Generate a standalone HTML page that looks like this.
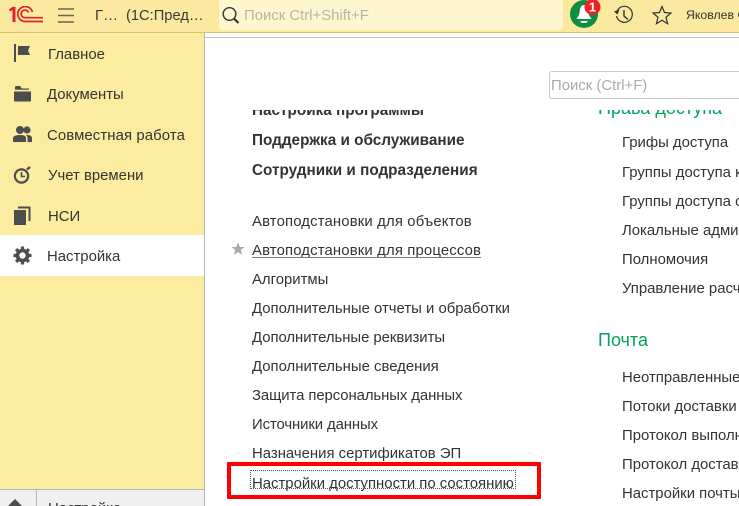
<!DOCTYPE html>
<html lang="ru">
<head>
<meta charset="utf-8">
<title>1С</title>
<style>
html,body{margin:0;padding:0;background:#fff}
#p{position:relative;width:739px;height:506px;overflow:hidden;background:#fff;font-family:"Liberation Sans",sans-serif;font-size:14.9px;color:#333}
#p div,#p svg{position:absolute}
.t{position:absolute;white-space:nowrap;line-height:16px;height:16px}
.b{font-weight:bold;font-size:15.3px}
.g{color:#00a35c;font-size:18px;line-height:20px;height:20px}
</style>
</head>
<body>
<div id="p">
  <!-- header -->
  <div style="left:0;top:0;width:739px;height:32px;background:#fbe9a0"></div>
  <div style="left:0;top:32px;width:739px;height:1px;background:#d9c267"></div>
  <!-- 1C logo -->
  <svg style="left:9px;top:6px" width="35" height="17" viewBox="0 0 35 17" fill="none" stroke="#e0202a">
    <path d="M0.500 4.500 L5 1.500" stroke-width="2.400"/>
    <path d="M5 1 V16" stroke-width="3"/>
    <path d="M34 15.500 H16 A7.500 7.500 0 1 1 23.500 6" stroke-width="1.700"/>
    <path d="M34 11.700 H16 A3.800 3.800 0 1 1 19.500 6.500" stroke-width="1.700"/>
  </svg>
  <!-- burger -->
  <svg style="left:58px;top:8px" width="17" height="15" viewBox="0 0 17 15" stroke="#6b6545" stroke-width="1.600"><path d="M0 1H16M0 7.500H16M0 14H16"/></svg>
  <span class="t" style="left:95px;top:8px;color:#3a3a3a">Г…</span>
  <span class="t" style="left:126px;top:8px;color:#3a3a3a;font-size:14.7px">(1С:Пред…</span>
  <!-- global search -->
  <div style="left:219px;top:0;width:344px;height:30px;background:#fdf6cf;border-radius:0 0 4px 4px"></div>
  <svg style="left:221px;top:6px" width="20" height="19" viewBox="0 0 20 19" fill="none" stroke="#333"><circle cx="8.500" cy="8" r="6.300" stroke-width="1.400"/><path d="M13 12.500L17.500 17" stroke-width="2.200"/></svg>
  <span class="t" style="left:244px;top:8px;color:#b9b6a6">Поиск Ctrl+Shift+F</span>
  <!-- bell -->
  <svg style="left:570px;top:0" width="34" height="30" viewBox="0 0 34 30">
    <circle cx="14" cy="14" r="14" fill="#0c8f40"/>
    <path d="M14 5 C10.500 5 10 9 9.500 13 C9 16 7.500 17 6.500 19 H21.500 C20.500 17 19 16 18.500 13 C18 9 17.500 5 14 5Z" fill="#fff"/>
    <path d="M10 21 H18 L16 23 H12Z" fill="#fff"/>
    <circle cx="22.500" cy="7" r="8" fill="#ed2227"/>
    <text x="22.500" y="11.500" text-anchor="middle" font-family="Liberation Sans" font-size="12.500" font-weight="bold" fill="#fff">1</text>
  </svg>
  <!-- history -->
  <svg style="left:613px;top:5px" width="22" height="21" viewBox="0 0 22 21" fill="none" stroke="#333" stroke-width="1.200"><path d="M4.300 5.500A8 8 0 1 1 3.500 11"/><path d="M1 6.500L4.500 9.500L6.500 4.500" fill="#333" stroke="none"/><path d="M11 5V11L15 14.500" stroke-width="1.400"/></svg>
  <!-- star -->
  <svg style="left:652px;top:5px" width="20" height="20" viewBox="0 0 20 20" fill="none" stroke="#333" stroke-width="1.200"><path d="M10 1.500L12.500 7.500L19 8L14 12.200L15.600 18.700L10 15.200L4.400 18.700L6 12.200L1 8L7.500 7.500Z"/></svg>
  <span class="t" style="left:686px;top:7px;font-size:12.300px;color:#333">Яковлев С</span>

  <!-- sidebar -->
  <div style="left:0;top:33px;width:204px;height:457px;background:#fbec9f"></div>
  <div style="left:204px;top:33px;width:1px;height:473px;background:#b5b5b5"></div>
  <div style="left:0;top:235px;width:204px;height:41px;background:#fff"></div>

  <svg style="left:13px;top:44px" width="19" height="20" viewBox="0 0 19 20" fill="#4d4d4d"><rect x="1" y="0" width="2" height="18"/><path d="M5 2H17L15 6.500L17 11H5Z"/></svg>
  <svg style="left:14px;top:85px" width="18" height="17" viewBox="0 0 18 17" fill="#4d4d4d"><path d="M1 2.500Q1 1 2.500 1H6L8 3.500H15V4.800H1Z"/><path d="M0 6.500H17V15.500Q17 16.500 16 16.500H1Q0 16.500 0 15.500Z"/></svg>
  <svg style="left:13px;top:125px" width="20" height="18" viewBox="0 0 20 18" fill="#4d4d4d"><circle cx="7" cy="5" r="4"/><circle cx="14" cy="5" r="3.600"/><path d="M0 17V13C0 11 3 10 7 10S13 11 13 13V17Z"/><path d="M14 10C17 10 19 11 19 13V17H14.500V13C14.500 12 14 11 13 10.300Z"/></svg>
  <svg style="left:13px;top:165px" width="20" height="20" viewBox="0 0 20 20" fill="none" stroke="#4d4d4d"><circle cx="8.500" cy="11" r="6.600" stroke-width="2.200"/><path d="M8.500 7V11.500H12" stroke-width="1.600"/><path d="M14 4.500L17 2" stroke-width="2.400"/></svg>
  <svg style="left:14px;top:206px" width="18" height="20" viewBox="0 0 18 20" fill="#4d4d4d"><rect x="0" y="4" width="12" height="15"/><path d="M4 0.500H16.500V15H14.500V2.500H4Z"/></svg>
  <svg style="left:13px;top:246px" width="19" height="19" viewBox="0 0 19 19"><circle cx="9.500" cy="9.500" r="5" fill="none" stroke="#4d4d4d" stroke-width="3.600"/><path d="M9.500 0.500V4M9.500 15V18.500M0.500 9.500H4M15 9.500H18.500M3.100 3.100L5.600 5.600M13.400 13.400L15.900 15.900M3.100 15.900L5.600 13.400M13.400 5.600L15.900 3.100" stroke="#4d4d4d" stroke-width="3.200"/></svg>

  <span class="t" style="left:48px;top:47px">Главное</span>
  <span class="t" style="left:47px;top:87px">Документы</span>
  <span class="t" style="left:47px;top:128px;letter-spacing:.1px">Совместная работа</span>
  <span class="t" style="left:48px;top:168px">Учет времени</span>
  <span class="t" style="left:48px;top:209px">НСИ</span>
  <span class="t" style="left:47px;top:249px">Настройка</span>

  <!-- sidebar bottom -->
  <div style="left:0;top:490px;width:204px;height:16px;background:#f0f0f0"></div>
  <div style="left:0;top:489px;width:204px;height:1px;background:#b5b5b5"></div>
  <div style="left:36px;top:490px;width:1px;height:16px;background:#b5b5b5"></div>
  <svg style="left:8px;top:499px" width="14" height="7" viewBox="0 0 14 7" fill="#4d4d4d"><path d="M7 0L14 7H0Z"/></svg>
  <span class="t" style="left:48px;top:501px;color:#333">Настройка</span>

  <!-- content top line -->
  <div style="left:205px;top:37px;width:534px;height:1px;background:#c4c4c4"></div>
  <!-- search -->
  <div style="left:549px;top:71px;width:200px;height:26px;border:1px solid #c8c8c8;border-radius:3px;background:#fff"></div>
  <span class="t" style="left:551px;top:78px;color:#ababab">Поиск (Ctrl+F)</span>

  <!-- clipped tops -->
  <div style="left:205px;top:110px;width:534px;height:396px;overflow:hidden">
    <span class="t b" style="left:47px;top:-7px">Настройка программы</span>
    <span class="t g" style="left:393px;top:-12px">Права доступа</span>
  </div>

  <span class="t b" style="left:252px;top:133px">Поддержка и обслуживание</span>
  <span class="t b" style="left:252px;top:163px">Сотрудники и подразделения</span>

  <span class="t" style="left:252px;top:214px;letter-spacing:.14px">Автоподстановки для объектов</span>
  <svg style="left:231px;top:242px" width="14" height="14" viewBox="0 0 14 14" fill="#a8a8a8"><path d="M7 0.500L8.800 5H13.600L9.700 8L11.200 13L7 10L2.800 13L4.300 8L0.400 5H5.200Z"/></svg>
  <span class="t" style="left:252px;top:243px;letter-spacing:.14px">Автоподстановки для процессов</span>
  <div style="left:252px;top:257px;width:229px;height:1px;background:#7a7a7a"></div>
  <span class="t" style="left:252px;top:272px">Алгоритмы</span>
  <span class="t" style="left:252px;top:301px">Дополнительные отчеты и обработки</span>
  <span class="t" style="left:252px;top:330px;letter-spacing:-.04px">Дополнительные реквизиты</span>
  <span class="t" style="left:252px;top:359px">Дополнительные сведения</span>
  <span class="t" style="left:252px;top:388px;letter-spacing:-.08px">Защита персональных данных</span>
  <span class="t" style="left:252px;top:417px;letter-spacing:-.1px">Источники данных</span>
  <span class="t" style="left:252px;top:446px">Назначения сертификатов ЭП</span>
  <span class="t" style="left:252px;top:476px">Настройки доступности по состоянию</span>
  <div style="left:250px;top:470px;width:264px;height:17px;border:1px dotted #555"></div>
  <div style="left:227px;top:462px;width:306px;height:29px;border:4px solid #fe0000;border-radius:1px"></div>

  <!-- right column -->
  <span class="t" style="left:622px;top:135px">Грифы доступа</span>
  <span class="t" style="left:622px;top:165px">Группы доступа к</span>
  <span class="t" style="left:622px;top:194px">Группы доступа с</span>
  <span class="t" style="left:622px;top:223px">Локальные админ</span>
  <span class="t" style="left:622px;top:252px">Полномочия</span>
  <span class="t" style="left:622px;top:281px">Управление расч</span>
  <span class="t g" style="left:598px;top:330px">Почта</span>
  <span class="t" style="left:622px;top:370px">Неотправленные</span>
  <span class="t" style="left:622px;top:399px">Потоки доставки</span>
  <span class="t" style="left:622px;top:428px">Протокол выполн</span>
  <span class="t" style="left:622px;top:457px">Протокол достав</span>
  <span class="t" style="left:622px;top:486px">Настройки почты</span>
</div>
</body>
</html>
